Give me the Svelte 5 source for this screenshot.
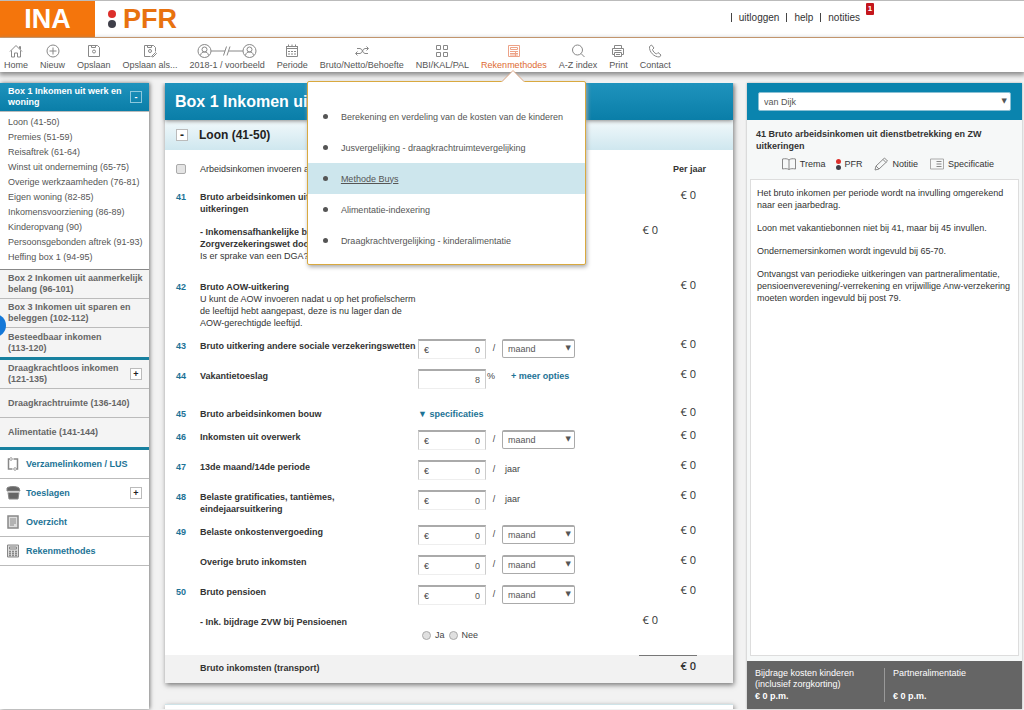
<script>
    let client = 'van Dijk';
    let activeMenu = 'Rekenmethodes';

    const navItems = [
        { label: 'Home', icon: 'home' },
        { label: 'Nieuw', icon: 'plus' },
        { label: 'Opslaan', icon: 'save' },
        { label: 'Opslaan als...', icon: 'saveas' },
        { label: '2018-1 / voorbeeld', icon: 'persons' },
        { label: 'Periode', icon: 'calendar' },
        { label: 'Bruto/Netto/Behoefte', icon: 'shuffle' },
        { label: 'NBI/KAL/PAL', icon: 'grid' },
        { label: 'Rekenmethodes', icon: 'calc' },
        { label: 'A-Z index', icon: 'search' },
        { label: 'Print', icon: 'print' },
        { label: 'Contact', icon: 'phone' }
    ];

    const methods = [
        'Berekening en verdeling van de kosten van de kinderen',
        'Jusvergelijking - draagkrachtruimtevergelijking',
        'Methode Buys',
        'Alimentatie-indexering',
        'Draagkrachtvergelijking - kinderalimentatie'
    ];

    const boxLinks = [
        'Loon (41-50)',
        'Premies (51-59)',
        'Reisaftrek (61-64)',
        'Winst uit onderneming (65-75)',
        'Overige werkzaamheden (76-81)',
        'Eigen woning (82-85)',
        'Inkomensvoorziening (86-89)',
        'Kinderopvang (90)',
        'Persoonsgebonden aftrek (91-93)',
        'Heffing box 1 (94-95)'
    ];

    const sections = [
        { label: 'Box 2 Inkomen uit aanmerkelijk\nbelang (96-101)' },
        { label: 'Box 3 Inkomen uit sparen en\nbeleggen (102-112)' },
        { label: 'Besteedbaar inkomen\n(113-120)', thick: true },
        { label: 'Draagkrachtloos inkomen\n(121-135)', plus: true },
        { label: 'Draagkrachtruimte (136-140)' },
        { label: 'Alimentatie (141-144)', thick: true }
    ];

    const tools = [
        { label: 'Verzamelinkomen / LUS', icon: 'cycle' },
        { label: 'Toeslagen', icon: 'purse', plus: true },
        { label: 'Overzicht', icon: 'doc' },
        { label: 'Rekenmethodes', icon: 'calcdark' }
    ];

    const rows = [
        { id: 'r41', nr: '41', label: 'Bruto arbeidsinkomen uit dienstbetrekking en ZW uitkeringen', year: '€ 0' },
        { id: 'r41b', label: '- Inkomensafhankelijke bijdrage Zorgverzekeringswet door werkgever', note: 'Is er sprake van een DGA?', sub: '€ 0', extra: true },
        { id: 'r42', nr: '42', label: 'Bruto AOW-uitkering', note: 'U kunt de AOW invoeren nadat u op het profielscherm de leeftijd hebt aangepast, deze is nu lager dan de AOW-gerechtigde leeftijd.', year: '€ 0' },
        { id: 'r43', nr: '43', label: 'Bruto uitkering andere sociale verzekeringswetten', field: 'maand', year: '€ 0' },
        { id: 'r44', nr: '44', label: 'Vakantietoeslag', field: 'percent', year: '€ 0', extra: true },
        { id: 'r45', nr: '45', label: 'Bruto arbeidsinkomen bouw', field: 'spec', year: '€ 0' },
        { id: 'r46', nr: '46', label: 'Inkomsten uit overwerk', field: 'maand', year: '€ 0' },
        { id: 'r47', nr: '47', label: '13de maand/14de periode', field: 'jaar', year: '€ 0' },
        { id: 'r48', nr: '48', label: 'Belaste gratificaties, tantièmes, eindejaarsuitkering', field: 'jaar', year: '€ 0' },
        { id: 'r49', nr: '49', label: 'Belaste onkostenvergoeding', field: 'maand', year: '€ 0' },
        { id: 'r49b', label: 'Overige bruto inkomsten', field: 'maand', year: '€ 0' },
        { id: 'r50', nr: '50', label: 'Bruto pensioen', field: 'maand', year: '€ 0' },
        { id: 'r50b', label: '- Ink. bijdrage ZVW bij Pensioenen', field: 'radio', sub: '€ 0' }
    ];
</script>

{#snippet icon(name)}
    {#if name === 'persons'}
        <svg width="60" height="16" viewBox="0 0 60 16">
            <circle cx="7.5" cy="8" r="6.5" /><circle cx="7.5" cy="6.5" r="2.5" /><path d="M3.5 12.5c.5-3 2-3.5 4-3.5s3.5.5 4 3.5" />
            <circle cx="52.5" cy="8" r="6.5" /><circle cx="52.5" cy="6.5" r="2.5" /><path d="M48.5 12.5c.5-3 2-3.5 4-3.5s3.5.5 4 3.5" />
            <path d="M14 8h14M32 8h14M26.5 12.5l3-9M30 12.5l3-9" />
        </svg>
    {:else}
        <svg width="16" height="16" viewBox="0 0 16 16">
            {#if name === 'home'}
                <path d="M2 8.5L8 2.5l6 6M3.5 7.5V14h3v-4h3v4h3V7.5M11.5 5.5v-2h1v3" />
            {:else if name === 'plus'}
                <circle cx="8" cy="8" r="6" /><path d="M8 4.5v7M4.5 8h7" />
            {:else if name === 'save'}
                <path d="M2.5 2.5h9l2 2v9h-11zM5.500 2.500v2h4v-2" /><circle cx="8" cy="8.5" r="1.500" />
            {:else if name === 'saveas'}
                <path d="M8.5 13.5h-6v-11h9l2 2v4M5.5 2.5v2h4v-2M9.5 13.5l4-4 1 1-3.5 3.5z" /><circle cx="8" cy="8" r="1.5" />
            {:else if name === 'calendar'}
                <path d="M2 3.500h12M2.500 5.500h11M2.500 3v10.500h11V3M4.500 1.500v2.500M8 1.500v2.500M11.500 1.500v2.500" /><path d="M4 8.500h8M4 11h8" stroke-dasharray="2 1" />
            {:else if name === 'shuffle'}
                <path d="M3 5.500h3c2.500 0 2.500 5 5 5h3M2 10.500h4c2.500 0 2.500-5 5-5h3M12.500 3.500l2 2-2 2M3.500 8.500l-2 2 2 2" />
            {:else if name === 'grid'}
                <path d="M2.5 2.500h4v4h-4zM9.500 2.500h4v4h-4zM2.500 9.500h4v4h-4zM9.500 9.500h4v4h-4z" />
            {:else if name === 'calc'}
                <path d="M2.5 2.5h11v11h-11zM4.5 4.5h7v2h-7zM4 8.5h8M4 10.5h8M4 12h8M9.5 8v5" />
            {:else if name === 'search'}
                <circle cx="7.5" cy="7" r="5" /><path d="M11 10.5l3.500 3.500" />
            {:else if name === 'print'}
                <path d="M4.500 5.500v-3h7v3M4.500 11.500h-2v-6h11v6h-2M4.500 9.500h7v4h-7zM6 11.500h4M4.500 7.500h7" />
            {:else if name === 'phone'}
                <path d="M2.500 3.500l2-1.500 2.500 3-1.500 1.500c.5 2 2 3.500 4 4.500l1.500-1.500 3 2.500-1.500 2C7 14 2 9 2.500 3.500z" />
            {:else if name === 'cycle'}
                <path d="M5.500 3h-2v10h4M10.500 13h2V3h-4" stroke-width="1.500" /><path d="M5.500 1l2 2-2 2M10.500 11l-2 2 2 2" />
            {:else if name === 'purse'}
                <path d="M3 7.500h11l-1 6.500H4zM2 3c2-2 10-2 12 0l1 3H2z" fill="#666" /><path d="M3 7h11" stroke="#ddd" />
            {:else if name === 'doc'}
                <path d="M3 2h10v12H3z" stroke-width="1.500" fill="#ddd" /><path d="M5 5h6M5 7h6M5 9h6M5 11h4" />
            {:else if name === 'calcdark'}
                <path d="M2.500 2h11v12h-11zM4.500 4h7v2h-7z" fill="#ddd" /><path d="M4 8.500h8M4 10.500h8M4 12.500h8" stroke-width="1.500" stroke-dasharray="2 1" />
            {:else if name === 'book'}
                <path d="M8 4C6.500 2.500 4 2.500 1.500 3v10c2.500-.5 5-.5 6.500.5 1.500-1 4-1 6.500-.5V3C12 2.500 9.500 2.500 8 4zM8 4v9.500" />
            {:else if name === 'pencil'}
                <path d="M2 14l1-4 8.500-8 3 3L6 13zM3 10l3 3M10 3.500l3 3" />
            {:else if name === 'spec'}
                <path d="M1.500 3h13v10h-13z" stroke="#aaa" /><path d="M7.500 5.500h5M7.500 8h5M7.500 10.500h5" />
            {/if}
        </svg>
    {/if}
{/snippet}

<div class="page">
    <header>
        <div class="ina">INA</div>
        <div class="dots"><i></i><i></i></div>
        <div class="pfr">PFR</div>
        <div class="account">
            <a href="#uitloggen">uitloggen</a>
            <a href="#help">help</a>
            <a href="#notities">notities</a>
            <span class="badge">1</span>
        </div>
    </header>

    <nav>
        {#each navItems as item}
            <div class="nav-item">
                <a href="#{item.icon}" class:active={item.label === activeMenu}>
                    {@render icon(item.icon)}
                    <span>{item.label}</span>
                </a>
                {#if item.label === activeMenu}
                    <div class="dropdown">
                        <svg class="notch" width="24" height="12" viewBox="0 0 24 12">
                            <path d="M0 12L2 11L12 .5L22 11L24 12z" fill="#fff" stroke="none" />
                            <path d="M1 11.5L12 .5L23 11.5" stroke="#dfa987" />
                        </svg>
                        <ul>
                            {#each methods as method}
                                <li class:hover={method === 'Methode Buys'}><a href="#methode">{method}</a></li>
                            {/each}
                        </ul>
                    </div>
                {/if}
            </div>
        {/each}
    </nav>

    <div class="content">
        <aside class="sidebar">
            <div class="box-head">
                <span>Box 1 Inkomen uit werk en woning</span>
                <button class="toggle light" aria-label="Inklappen">-</button>
            </div>
            <ul class="box-links">
                {#each boxLinks as link}
                    <li><a href="#post">{link}</a></li>
                {/each}
            </ul>
            {#each sections as section}
                <div class="section" class:thick={section.thick}>
                    <a href="#sectie">{section.label}</a>
                    {#if section.plus}<button class="toggle" aria-label="Uitklappen">+</button>{/if}
                </div>
            {/each}
            {#each tools as tool}
                <div class="tool">
                    {@render icon(tool.icon)}
                    <a href="#tool">{tool.label}</a>
                    {#if tool.plus}<button class="toggle" aria-label="Uitklappen">+</button>{/if}
                </div>
            {/each}
            <span class="bubble"></span>
        </aside>

        <main>
            <section class="card">
                <h1>Box 1 Inkomen uit werk en woning</h1>
                <h2><button class="toggle" aria-label="Inklappen">-</button>Loon (41-50)</h2>

                <div class="row check">
                    <input type="checkbox" id="perjaar" />
                    <label for="perjaar">Arbeidsinkomen invoeren aan de hand van jaaropgaaf</label>
                    <b>Per jaar</b>
                </div>

                {#each rows as row}
                    <div class="row" class:extra={row.extra}>
                        <span class="nr">{row.nr || ''}</span>
                        <div class="text">
                            <label for={row.id}>{row.label}</label>
                            {#if row.note}<p>{row.note}</p>{/if}
                        </div>
                        <div class="control">
                            {#if row.field === 'maand' || row.field === 'jaar'}
                                <span class="amount">€<input id={row.id} type="text" value="0" /></span>
                                <span class="slash">/</span>
                                {#if row.field === 'maand'}
                                    <span class="select">
                                        <select aria-label="Periode {row.label}"><option>maand</option><option>jaar</option></select>
                                    </span>
                                {:else}
                                    <span class="jaar">jaar</span>
                                {/if}
                            {:else if row.field === 'percent'}
                                <span class="amount"><input id={row.id} type="text" value="8" /></span>
                                <span class="pct">%</span>
                                <a href="#opties">+ meer opties</a>
                            {:else if row.field === 'spec'}
                                <a class="spec" id={row.id} href="#specificaties">▼ specificaties</a>
                            {:else if row.field === 'radio'}
                                <div class="radios">
                                    <input type="radio" name="zvw" id={row.id} /><label for={row.id}>Ja</label>
                                    <input type="radio" name="zvw" id="zvwnee" /><label for="zvwnee">Nee</label>
                                </div>
                            {/if}
                        </div>
                        <span class="money">{row.sub || ''}</span>
                        <span class="money">{row.year || ''}</span>
                    </div>
                {/each}

                <div class="row total">
                    <span class="text">Bruto inkomsten (transport)</span>
                    <span class="money">€ 0</span>
                </div>
            </section>
            <section class="card next"></section>
        </main>

        <aside class="info">
            <div class="client">
                <span class="select">
                    <select bind:value={client} aria-label="Cliënt"><option>van Dijk</option></select>
                </span>
            </div>
            <div class="info-head">
                <h3>41 Bruto arbeidsinkomen uit dienstbetrekking en ZW uitkeringen</h3>
                <div class="info-tools">
                    <a href="#trema">{@render icon('book')}Trema</a>
                    <a href="#pfr"><span class="dots small"><i></i><i></i></span>PFR</a>
                    <a href="#notitie">{@render icon('pencil')}Notitie</a>
                    <a href="#specificatie">{@render icon('spec')}Specificatie</a>
                </div>
            </div>
            <div class="info-text">
                <p>Het bruto inkomen per periode wordt na invulling omgerekend naar een jaarbedrag.</p>
                <p>Loon met vakantiebonnen niet bij 41, maar bij 45 invullen.</p>
                <p>Ondernemersinkomen wordt ingevuld bij 65-70.</p>
                <p>Ontvangst van periodieke uitkeringen van partneralimentatie, pensioenverevening/-verrekening en vrijwillige Anw-verzekering moeten worden ingevuld bij post 79.</p>
            </div>
            <footer>
                <div><span>Bijdrage kosten kinderen (inclusief zorgkorting)</span><b>€ 0 p.m.</b></div>
                <div><span>Partneralimentatie</span><b>€ 0 p.m.</b></div>
            </footer>
        </aside>
    </div>
</div>

<style>
    :global(body) {
        background: #f2f2f2;
        font-family: "Liberation Sans", Arial, sans-serif;
        font-size: 9px;
        line-height: 12px;
        color: #333;
    }

    .page {
        height: 100vh;
        display: flex;
        flex-direction: column;
        overflow: hidden;
        box-sizing: border-box;
        border-top: 1px solid #bbb;
    }

    a {
        color: inherit;
        text-decoration: none;
    }

    ul, p, h1, h2, h3 {
        margin: 0;
        padding: 0;
    }

    ul {
        list-style: none;
    }

    input, select, button {
        font: inherit;
        color: #555;
        margin: 0;
        box-sizing: border-box;
    }

    svg {
        flex: none;
        fill: none;
        stroke: #888;
    }

    /* header */
    header {
        display: flex;
        align-items: center;
        height: 36px;
        flex: none;
        background: #fff;
        border-bottom: 1px solid #d99a62;
    }

    .ina, .pfr {
        font-size: 27px;
        font-weight: bold;
        line-height: 36px;
    }

    .ina {
        width: 95px;
        text-align: center;
        color: #fff;
        background: #f4750c;
    }

    .pfr {
        color: #e8720f;
        margin-left: 7px;
    }

    .dots {
        display: flex;
        flex-direction: column;
        gap: 2px;
        margin-left: 13px;
    }

    .dots i {
        width: 8px;
        height: 8px;
        border-radius: 50%;
        background: #dc2f2b;
    }

    .dots i + i {
        background: #3f3f49;
    }

    .dots.small {
        gap: 1px;
        margin: 0;
    }

    .dots.small i {
        width: 5px;
        height: 5px;
    }

    .account {
        position: relative;
        display: flex;
        margin-left: auto;
        margin-right: 164px;
        padding-bottom: 4px;
        font-size: 10px;
    }

    .account a {
        border-left: 1px solid #444;
        padding-left: 7px;
        margin-left: 7px;
        line-height: 9px;
    }

    .badge {
        position: absolute;
        left: 100%;
        top: -10px;
        margin-left: 6px;
        width: 8px;
        height: 12px;
        border-radius: 1px;
        background: #c4161c;
        color: #fff;
        font-size: 8px;
        font-weight: bold;
        line-height: 11px;
        text-align: center;
    }

    /* menu bar */
    nav {
        position: relative;
        z-index: 2;
        display: flex;
        gap: 12px;
        height: 34px;
        flex: none;
        padding-left: 4px;
        background: #fff;
        box-shadow: 0 2px 5px 1px #888;
    }

    .nav-item {
        position: relative;
    }

    .nav-item > a {
        display: flex;
        flex-direction: column;
        align-items: center;
        padding-top: 5px;
        color: #555;
        white-space: nowrap;
    }

    .nav-item > a.active {
        color: #dd6a32;
    }

    .nav-item > a.active svg {
        stroke: #eda287;
    }

    .dropdown {
        position: absolute;
        top: 43px;
        left: 50%;
        margin-left: -207px;
        width: 277px;
        padding: 19px 0 8px;
        background: #fff;
        border: 1px solid #d9a93f;
        border-radius: 2px;
        box-shadow: 1px 2px 4px #aaa;
        color: #555;
    }

    .notch {
        position: absolute;
        top: -12px;
        left: 193px;
    }

    .dropdown li {
        display: flex;
        align-items: center;
        height: 31px;
        padding-left: 15px;
    }

    .dropdown li::before {
        content: "";
        width: 5px;
        height: 5px;
        margin-right: 13px;
        border-radius: 50%;
        background: #555;
    }

    .dropdown .hover {
        background: #cde6ed;
    }

    .hover a {
        text-decoration: underline;
    }

    /* columns */
    .content {
        flex: 1;
        display: flex;
        min-height: 0;
        padding: 11px 2px 1px 0;
    }

    .sidebar {
        position: relative;
        flex: none;
        width: 149px;
        background: #fff;
        box-shadow: 1px 0 4px #777;
    }

    .box-head, .section, .tool {
        display: flex;
        align-items: center;
        justify-content: space-between;
        height: 28px;
        padding: 0 7px 0 8px;
        border-bottom: 1px solid #bbb;
        font-weight: bold;
        line-height: 11px;
    }

    .box-head {
        color: #fff;
        background: linear-gradient(#1f93bd, #0a7ea8);
    }

    .box-head span {
        width: 116px;
    }

    .toggle {
        flex: none;
        width: 12px;
        height: 12px;
        padding: 0;
        border: 1px solid #bbb;
        background: #fff;
        color: #222;
        font-weight: bold;
        line-height: 9px;
    }

    .toggle.light {
        background: none;
        border-color: #8cc8dd;
        color: #fff;
    }

    .box-links {
        padding: 3px 8px 4px;
        border-bottom: 1px solid #888;
        line-height: 15px;
        color: #555;
        white-space: nowrap;
    }

    .section {
        background: #f4f4f4;
        color: #666;
        white-space: pre;
    }

    .section.thick {
        height: 29px;
        border-bottom: 3px solid #17809f;
    }

    .tool {
        justify-content: flex-start;
        gap: 5px;
        padding-left: 5px;
        color: #1d7396;
    }

    .tool .toggle {
        margin-left: auto;
    }

    .bubble {
        position: absolute;
        left: -17px;
        top: 231px;
        width: 23px;
        height: 23px;
        border-radius: 50%;
        background: #1478d8;
        clip-path: inset(0 0 0 17px);
    }

    main {
        flex: 1;
        min-width: 0;
        overflow: hidden;
        padding: 0 14px 0 16px;
    }

    .card {
        background: #fff;
        box-shadow: 1px 2px 5px #777;
    }

    .next {
        height: 40px;
        margin-top: 21px;
        border-top: 1px solid #cfe3e8;
    }

    h1 {
        position: relative;
        padding-left: 10px;
        font-size: 16px;
        line-height: 37px;
        color: #fff;
        background: linear-gradient(#1f93bd, #0a7ea8);
        box-shadow: 0 1px 4px #888;
    }

    h2 {
        display: flex;
        align-items: center;
        gap: 11px;
        height: 30px;
        padding-left: 11px;
        font-size: 12px;
        color: #222;
        background: linear-gradient(#f2f9fb, #cfe7ef);
    }

    .row {
        display: grid;
        grid-template-columns: 24px 218px 1fr 20px 38px;
        padding: 0 36px 9px 11px;
    }

    .row.extra {
        padding-bottom: 17px;
    }

    .row.check {
        grid-template-columns: 24px 1fr auto;
        align-items: center;
        height: 30px;
        padding: 4px 27px 5px 11px;
    }

    .check input {
        width: 10px;
        height: 10px;
        appearance: none;
        border: 1px solid #aaa;
        border-radius: 2px;
        background: #e4e4e4;
    }

    .nr, .text {
        padding-top: 2px;
        font-weight: bold;
    }

    .nr {
        color: #1d7396;
    }

    .text p {
        font-weight: normal;
    }

    .control {
        display: flex;
        align-items: flex-start;
        color: #444;
    }

    .control > a {
        margin: 2px 0 0 16px;
        font-weight: bold;
        color: #1d7396;
    }

    .control > .spec {
        margin-left: 0;
    }

    .amount {
        display: flex;
        align-items: center;
        width: 68px;
        height: 20px;
        margin-top: 1px;
        padding-left: 5px;
        box-sizing: border-box;
        border: 1px solid #ccc;
        border-top: 2px solid #aaa;
        border-bottom-color: #eee;
    }

    .amount input {
        flex: 1;
        min-width: 0;
        padding: 0 5px 0 0;
        border: 0;
        background: none;
        text-align: right;
    }

    .slash {
        width: 16px;
        text-align: center;
        line-height: 21px;
    }

    .jaar {
        padding-left: 3px;
        line-height: 21px;
    }

    .pct {
        padding: 2px 0 0 1px;
    }

    .select {
        position: relative;
        display: block;
        line-height: 0;
    }

    .select::after {
        content: "▼";
        position: absolute;
        right: 4px;
        top: 0;
        font-family: "DejaVu Sans", sans-serif;
        font-size: 7px;
        line-height: 19px;
        color: #555;
        pointer-events: none;
    }

    .select select {
        width: 100%;
        height: 19px;
        padding: 0 5px;
        appearance: none;
        border: 1px solid #aaa;
        border-top-width: 2px;
        border-radius: 2px;
        background: #fff;
        line-height: 12px;
    }

    .control .select {
        width: 73px;
        margin-top: 1px;
    }

    .radios {
        display: flex;
        align-items: center;
        gap: 4px;
        padding: 15px 0 5px 4px;
    }

    .radios input {
        width: 9px;
        height: 9px;
        appearance: none;
        border: 1px solid #aaa;
        border-radius: 50%;
        background: #e0e0e0;
    }

    .money {
        padding-right: 1px;
        font-family: "Open Sans", sans-serif;
        font-size: 11px;
        text-align: right;
        white-space: nowrap;
    }

    .row.total {
        grid-template-columns: 1fr 58px;
        height: 28px;
        padding: 0 36px 0 35px;
        background: #f2f2f2;
    }

    .total .text {
        padding-top: 7px;
    }

    .total .money {
        border-top: 1px solid #777;
        padding-top: 4px;
        font-weight: 600;
    }

    /* right column */
    .info {
        flex: none;
        display: flex;
        flex-direction: column;
        width: 275px;
        background: #f6f8f8;
        box-shadow: 0 0 2px #aaa;
    }

    .client {
        padding: 9px 11px;
        background: #0a84ae;
    }

    .client select {
        border: 1px solid #8ac0d4;
    }

    .info-head {
        padding: 8px 9px 7px;
    }

    h3 {
        font-size: 9px;
    }

    .info-tools {
        display: flex;
        justify-content: flex-end;
        gap: 11px;
        padding: 4px 19px 0 0;
    }

    .info-tools a {
        display: flex;
        align-items: center;
        gap: 3px;
    }

    .info-text {
        flex: 1;
        margin: 0 3px 5px;
        padding: 7px 6px;
        background: #fff;
        border: 1px solid #ddd;
    }

    .info-text p {
        margin-bottom: 11px;
    }

    footer {
        display: flex;
        height: 48px;
        background: #656565;
        color: #fff;
        line-height: 11px;
    }

    footer div {
        display: flex;
        flex-direction: column;
        justify-content: space-between;
        flex: 1;
        margin: 7px 0;
        padding: 0 8px;
    }

    footer div + div {
        border-left: 1px solid #999;
    }
</style>
